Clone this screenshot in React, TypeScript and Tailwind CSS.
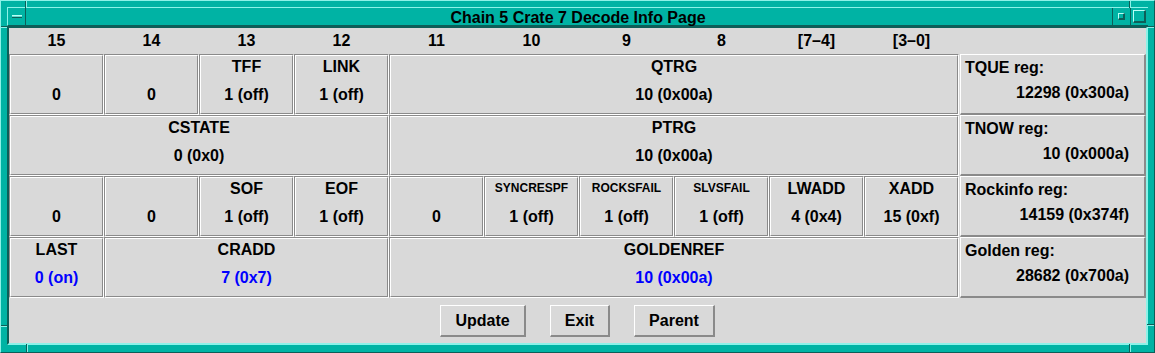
import React from "react";

type Cell = { span: number; label?: string; value: string; small?: boolean; blue?: boolean };

const SPAN: Record<number, string> = {
  1: "col-span-1",
  3: "col-span-3",
  4: "col-span-4",
  6: "col-span-6",
};

const rows: Cell[][] = [
  [
    { span: 1, value: "0" },
    { span: 1, value: "0" },
    { span: 1, label: "TFF", value: "1 (off)" },
    { span: 1, label: "LINK", value: "1 (off)" },
    { span: 6, label: "QTRG", value: "10 (0x00a)" },
  ],
  [
    { span: 4, label: "CSTATE", value: "0 (0x0)" },
    { span: 6, label: "PTRG", value: "10 (0x00a)" },
  ],
  [
    { span: 1, value: "0" },
    { span: 1, value: "0" },
    { span: 1, label: "SOF", value: "1 (off)" },
    { span: 1, label: "EOF", value: "1 (off)" },
    { span: 1, value: "0" },
    { span: 1, label: "SYNCRESPF", value: "1 (off)", small: true },
    { span: 1, label: "ROCKSFAIL", value: "1 (off)", small: true },
    { span: 1, label: "SLVSFAIL", value: "1 (off)", small: true },
    { span: 1, label: "LWADD", value: "4 (0x4)" },
    { span: 1, label: "XADD", value: "15 (0xf)" },
  ],
  [
    { span: 1, label: "LAST", value: "0 (on)", blue: true },
    { span: 3, label: "CRADD", value: "7 (0x7)", blue: true },
    { span: 6, label: "GOLDENREF", value: "10 (0x00a)", blue: true },
  ],
];

const regs = [
  ["TQUE reg:", "12298 (0x300a)"],
  ["TNOW reg:", "10 (0x000a)"],
  ["Rockinfo reg:", "14159 (0x374f)"],
  ["Golden reg:", "28682 (0x700a)"],
];

const headers = ["15", "14", "13", "12", "11", "10", "9", "8", "[7–4]", "[3–0]"];

function GridCell({ c }: { c: Cell }) {
  return (
    <div
      className={`${SPAN[c.span]} border-t border-l border-b border-r border-t-[#8a8a8a] border-l-[#8a8a8a] border-b-white border-r-white`}
    >
      <div className="h-full flex flex-col items-center border-t border-l border-b border-r border-t-white border-l-white border-b-[#8a8a8a] border-r-[#8a8a8a]">
        <div
          className={`h-[22px] flex justify-center ${c.small ? "items-start pt-[3px] text-[12px] leading-[14px]" : "items-center text-[16px] leading-[18px]"}`}
        >
          {c.label ?? ""}
        </div>
        <div
          className={`mt-[7px] h-[20px] flex items-center justify-center text-[16px] leading-[18px] ${c.blue ? "text-[#0000ff]" : "text-black"}`}
        >
          {c.value}
        </div>
      </div>
    </div>
  );
}

function RegCell({ label, value }: { label: string; value: string }) {
  return (
    <div className="col-start-11 pl-[1px]">
      <div className="h-full flex flex-col border-t border-l border-b-2 border-r-2 border-t-white border-l-white border-b-[#8a8a8a] border-r-[#8a8a8a]">
        <div className="h-[25px] flex items-center pl-[4px] text-[16px] leading-[18px]">{label}</div>
        <div className="mt-[3px] h-[20px] flex items-center justify-end pr-[15px] text-[16px] leading-[18px]">
          {value}
        </div>
      </div>
    </div>
  );
}

function Button({ w, label }: { w: string; label: string }) {
  return (
    <div
      className={`${w} h-[32px] flex items-center justify-center bg-[#d9d9d9] border-t border-l border-b-2 border-r-2 border-t-white border-l-white border-b-[#8a8a8a] border-r-[#8a8a8a] text-[16px]`}
    >
      {label}
    </div>
  );
}

export default function App() {
  return (
    <div
      className="relative w-[1155px] h-[353px] bg-[#00b3a4] border-t border-l border-b border-r border-t-[#8cf2e8] border-l-[#8cf2e8] border-b-[#0d5e58] border-r-[#0d5e58] pt-[6px] pl-[6px] pr-[6px] pb-[7px] flex flex-col font-bold text-black"
      style={{ fontFamily: '"Liberation Sans", Arial, Helvetica, sans-serif' }}
    >
      {/* frame corner marks */}
      <div className="absolute left-[24px] top-0 w-[1px] h-[7px] bg-[#0d5e58]" />
      <div className="absolute left-[25px] top-0 w-[1px] h-[7px] bg-[#8cf2e8]" />
      <div className="absolute left-[1128px] top-0 w-[1px] h-[7px] bg-[#0d5e58]" />
      <div className="absolute left-[1129px] top-0 w-[1px] h-[7px] bg-[#8cf2e8]" />
      <div className="absolute left-0 top-[25px] w-[6px] h-[1px] bg-[#0d5e58]" />
      <div className="absolute left-0 top-[26px] w-[6px] h-[1px] bg-[#8cf2e8]" />
      <div className="absolute right-0 top-[25px] w-[7px] h-[1px] bg-[#0d5e58]" />
      <div className="absolute right-0 top-[26px] w-[7px] h-[1px] bg-[#8cf2e8]" />
      <div className="absolute left-0 top-[324px] w-[6px] h-[1px] bg-[#0d5e58]" />
      <div className="absolute left-0 top-[325px] w-[6px] h-[1px] bg-[#8cf2e8]" />
      <div className="absolute right-0 top-[323px] w-[7px] h-[1px] bg-[#0d5e58]" />
      <div className="absolute right-0 top-[324px] w-[7px] h-[1px] bg-[#8cf2e8]" />
      <div className="absolute left-[25px] bottom-0 w-[1px] h-[8px] bg-[#0d5e58]" />
      <div className="absolute left-[26px] bottom-0 w-[1px] h-[8px] bg-[#8cf2e8]" />
      <div className="absolute left-[1128px] bottom-0 w-[1px] h-[8px] bg-[#0d5e58]" />
      <div className="absolute left-[1129px] bottom-0 w-[1px] h-[8px] bg-[#8cf2e8]" />

      {/* title bar */}
      <div className="h-[19px] flex bg-[#00b3a4] border-t border-l border-b border-t-[#8cf2e8] border-l-[#8cf2e8] border-b-[#0d5e58]">
        <div className="w-[18px] h-full flex items-center justify-center border-r border-r-[#0d5e58]">
          <div className="w-[10px] h-[3px] bg-[#5fd8cc] border-t border-t-[#b8fff6] border-b border-b-[#0d5e58]" />
        </div>
        <div className="flex-1 flex items-center justify-center pl-[18px] pt-[1px] text-[16px] leading-[17px]">
          Chain 5 Crate 7 Decode Info Page
        </div>
        <div className="w-[18px] h-full flex items-center justify-center border-l border-l-[#0d5e58]">
          <div className="w-[7px] h-[7px] bg-[#00b3a4] border-t border-l border-b-2 border-r-2 border-t-[#b8fff6] border-l-[#b8fff6] border-b-[#0d5e58] border-r-[#0d5e58]" />
        </div>
        <div className="w-[18px] h-full flex items-center justify-center border-l border-l-[#0d5e58]">
          <div className="w-[13px] h-[13px] bg-[#00b3a4] border-t border-l border-b-2 border-r-2 border-t-[#b8fff6] border-l-[#b8fff6] border-b-[#0d5e58] border-r-[#0d5e58]" />
        </div>
      </div>

      {/* content */}
      <div className="flex-1 flex flex-col bg-[#d9d9d9] border-t-2 border-l-2 border-b-2 border-r-2 border-t-[#0d5e58] border-l-[#0d5e58] border-b-[#8cf2e8] border-r-[#8cf2e8]">
        <div className="h-[26px] grid grid-cols-[repeat(10,95px)] items-center">
          {headers.map((h) => (
            <div key={h} className="text-center text-[16px] leading-[18px]">
              {h}
            </div>
          ))}
        </div>
        <div className="grid grid-cols-[repeat(10,95px)_187px] grid-rows-[repeat(4,61px)]">
          {rows.map((r, ri) => (
            <React.Fragment key={ri}>
              {r.map((c, ci) => (
                <GridCell key={ci} c={c} />
              ))}
              <RegCell label={regs[ri][0]} value={regs[ri][1]} />
            </React.Fragment>
          ))}
        </div>
        <div className="flex justify-center gap-[24px] pt-[7px]">
          <Button w="w-[86px]" label="Update" />
          <Button w="w-[60px]" label="Exit" />
          <Button w="w-[81px]" label="Parent" />
        </div>
      </div>
    </div>
  );
}
